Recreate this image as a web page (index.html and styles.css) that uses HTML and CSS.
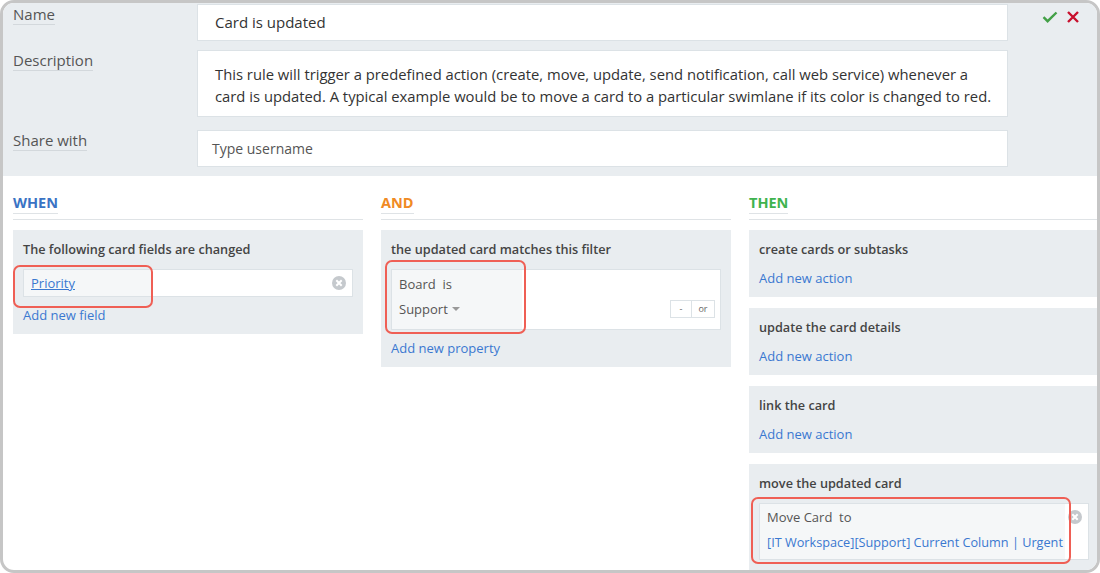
FILE: index.html
```html
<!DOCTYPE html>
<html>
<head>
<meta charset="utf-8">
<link rel="stylesheet" href="styles.css">
</head>
<body>
<div class="frame">
  <div class="top">
    <div class="row row-name">
      <div class="label"><span>Name</span></div>
      <div class="input input-name">Card is updated</div>
      <div class="actions">
        <svg class="ok" width="16" height="12" viewBox="0 0 16 12"><path d="M1.5 6.2 L5.6 10.2 L14.5 1.5" fill="none" stroke="#43a047" stroke-width="2.4"/></svg>
        <svg class="cancel" width="14" height="14" viewBox="0 0 14 14"><path d="M2 2 L12 12 M12 2 L2 12" fill="none" stroke="#c8102e" stroke-width="2.4"/></svg>
      </div>
    </div>
    <div class="row row-desc">
      <div class="label"><span>Description</span></div>
      <div class="input input-desc">This rule will trigger a predefined action (create, move, update, send notification, call web service) whenever a card is updated. A typical example would be to move a card to a particular swimlane if its color is changed to red.</div>
    </div>
    <div class="row row-share">
      <div class="label"><span>Share with</span></div>
      <div class="input input-share">Type username</div>
    </div>
  </div>
  <div class="bottom">
    <div class="col">
      <div class="col-head"><span class="h h-when">WHEN</span></div>
      <div class="box">
        <div class="box-title">The following card fields are changed</div>
        <div class="field">
          <div class="chip chip-field"><a class="link u">Priority</a></div>
          <svg class="clear" width="14" height="14" viewBox="0 0 14 14"><circle cx="7" cy="7" r="7" fill="#c5c9cd"/><path d="M4.3 4.3 L9.7 9.7 M9.7 4.3 L4.3 9.7" stroke="#fff" stroke-width="2"/></svg>
          <div class="mark mark-1"></div>
        </div>
        <div class="link add">Add new field</div>
      </div>
    </div>
    <div class="col">
      <div class="col-head"><span class="h h-and">AND</span></div>
      <div class="box">
        <div class="box-title">the updated card matches this filter</div>
        <div class="filter">
          <div class="chip chip-filter">
            <div class="line">Board&nbsp; is</div>
            <div class="line">Support <span class="caret"></span></div>
          </div>
          <div class="ops"><span class="op">-</span><span class="op">or</span></div>
          <div class="mark mark-2"></div>
        </div>
        <div class="link add">Add new property</div>
      </div>
    </div>
    <div class="col">
      <div class="col-head"><span class="h h-then">THEN</span></div>
      <div class="box">
        <div class="box-title">create cards or subtasks</div>
        <div class="link add2">Add new action</div>
      </div>
      <div class="box">
        <div class="box-title">update the card details</div>
        <div class="link add2">Add new action</div>
      </div>
      <div class="box">
        <div class="box-title">link the card</div>
        <div class="link add2">Add new action</div>
      </div>
      <div class="box box-move">
        <div class="box-title">move the updated card</div>
        <div class="move">
          <div class="chip chip-move">
            <div class="line">Move Card&nbsp; to</div>
            <div class="line link">[IT Workspace][Support] Current Column | Urgent</div>
          </div>
          <svg class="clear clear-move" width="14" height="14" viewBox="0 0 14 14"><circle cx="7" cy="7" r="7" fill="#c5c9cd"/><path d="M4.3 4.3 L9.7 9.7 M9.7 4.3 L4.3 9.7" stroke="#fff" stroke-width="2"/></svg>
          <div class="mark mark-3"></div>
        </div>
      </div>
    </div>
  </div>
</div>
</body>
</html>
```

FILE: styles.css
```css
* { box-sizing: border-box; }
html, body { margin: 0; padding: 0; background: #fff; }
body { font-family: "Open Sans", "Noto Sans", sans-serif; color: #444; }

.frame {
  width: 1100px;
  height: 573px;
  border: 3px solid #c6c6c6;
  border-radius: 14px;
  overflow: hidden;
  background: #fff;
}

.top {
  background: #e9edf0;
  padding: 1px 0 9px 10px;
}
.row { display: flex; align-items: flex-start; }
.row-desc { margin-top: 9px; }
.row-share { margin-top: 13px; }

.label { width: 184px; flex: none; margin-top: -1px; }
.label span {
  display: inline-block;
  font-size: 15px;
  line-height: 19px;
  color: #555;
  border-bottom: 1px solid #d3d8dc;
}

.input {
  width: 811px;
  flex: none;
  background: #fff;
  border: 1px solid #dce2e6;
  color: #333;
}
.input-name {
  height: 37px;
  padding: 0 17px;
  font-size: 15px;
  line-height: 35px;
}
.input-desc {
  height: 67px;
  padding: 12px 8px 12px 17px;
  font-size: 14.8px;
  line-height: 22px;
}
.input-share {
  height: 37px;
  padding: 0 14px;
  font-size: 14px;
  line-height: 35px;
  color: #555;
}

.actions {
  display: flex;
  gap: 8px;
  padding: 7px 0 0 34px;
}
.actions .cancel { margin-top: -1px; }

.bottom {
  display: flex;
  gap: 18px;
  padding: 0 0 0 10px;
}
.col { width: 350px; flex: none; }
.col-head {
  padding-top: 15px;
  border-bottom: 1px solid #dfe3e6;
  padding-bottom: 5px;
  margin-bottom: 10px;
}
.h {
  display: inline-block;
  font-size: 14.5px;
  font-weight: 700;
  line-height: 20px;
  border-bottom: 1px solid #dfe3e6;
}
.h-when { color: #3a73c4; }
.h-and { color: #f08a24; }
.h-then { color: #3fb34f; }

.box {
  background: #e9edf0;
  padding: 10px;
  margin-bottom: 11px;
  position: relative;
}
.box-title {
  font-size: 12.7px;
  font-weight: 600;
  line-height: 18px;
  color: #444;
}
.link { color: #3a78d0; font-size: 13px; }
.u { text-decoration: underline; }
.add { line-height: 18px; margin-top: 9px; }
.add2 { line-height: 18px; margin-top: 11px; }

.field {
  position: relative;
  margin-top: 11px;
  height: 28px;
  background: #fff;
  border: 1px solid #dce2e6;
  display: flex;
  align-items: stretch;
}
.chip { background: #f5f7f8; }
.chip-field {
  width: 127px;
  padding-left: 7px;
  line-height: 27px;
  font-size: 13px;
}
.clear { position: absolute; right: 6px; top: 6px; }

.filter {
  position: relative;
  margin-top: 11px;
  height: 61px;
  background: #fff;
  border: 1px solid #dce2e6;
}
.chip-filter {
  width: 130px;
  height: 59px;
  padding: 2px 7px;
  font-size: 13px;
  color: #555;
}
.line { line-height: 25px; font-size: 13px; }
.caret {
  display: inline-block;
  width: 0; height: 0;
  border-left: 4px solid transparent;
  border-right: 4px solid transparent;
  border-top: 4px solid #999;
  vertical-align: middle;
  margin-left: 1px;
  margin-top: -3px;
}
.ops {
  position: absolute;
  right: 5px;
  top: 30px;
  display: flex;
}
.op {
  width: 22px;
  height: 18px;
  border: 1px solid #dce2e6;
  font-size: 9px;
  line-height: 16px;
  text-align: center;
  color: #666;
  background: #fff;
}
.op + .op { border-left: none; width: 23px; }

.move {
  position: relative;
  margin-top: 11px;
  width: 330px;
  height: 57px;
  background: #fff;
  border: 1px solid #dce2e6;
}
.chip-move {
  width: 305px;
  height: 55px;
  padding: 1px 7px;
  color: #555;
  white-space: nowrap;
}
.chip-move .line { line-height: 25px; }
.chip-move .link { font-size: 12.7px; }
.clear-move { right: 6px; top: 6px; }

.mark {
  position: absolute;
  border: 2px solid #ef5f55;
  border-radius: 7px;
}
.mark-1 { left: -11px; top: -5px; width: 140px; height: 43px; }
.mark-2 { left: -7px; top: -10px; width: 141px; height: 74px; }
.mark-3 { left: -9px; top: -7px; width: 320px; height: 67px; }
```
